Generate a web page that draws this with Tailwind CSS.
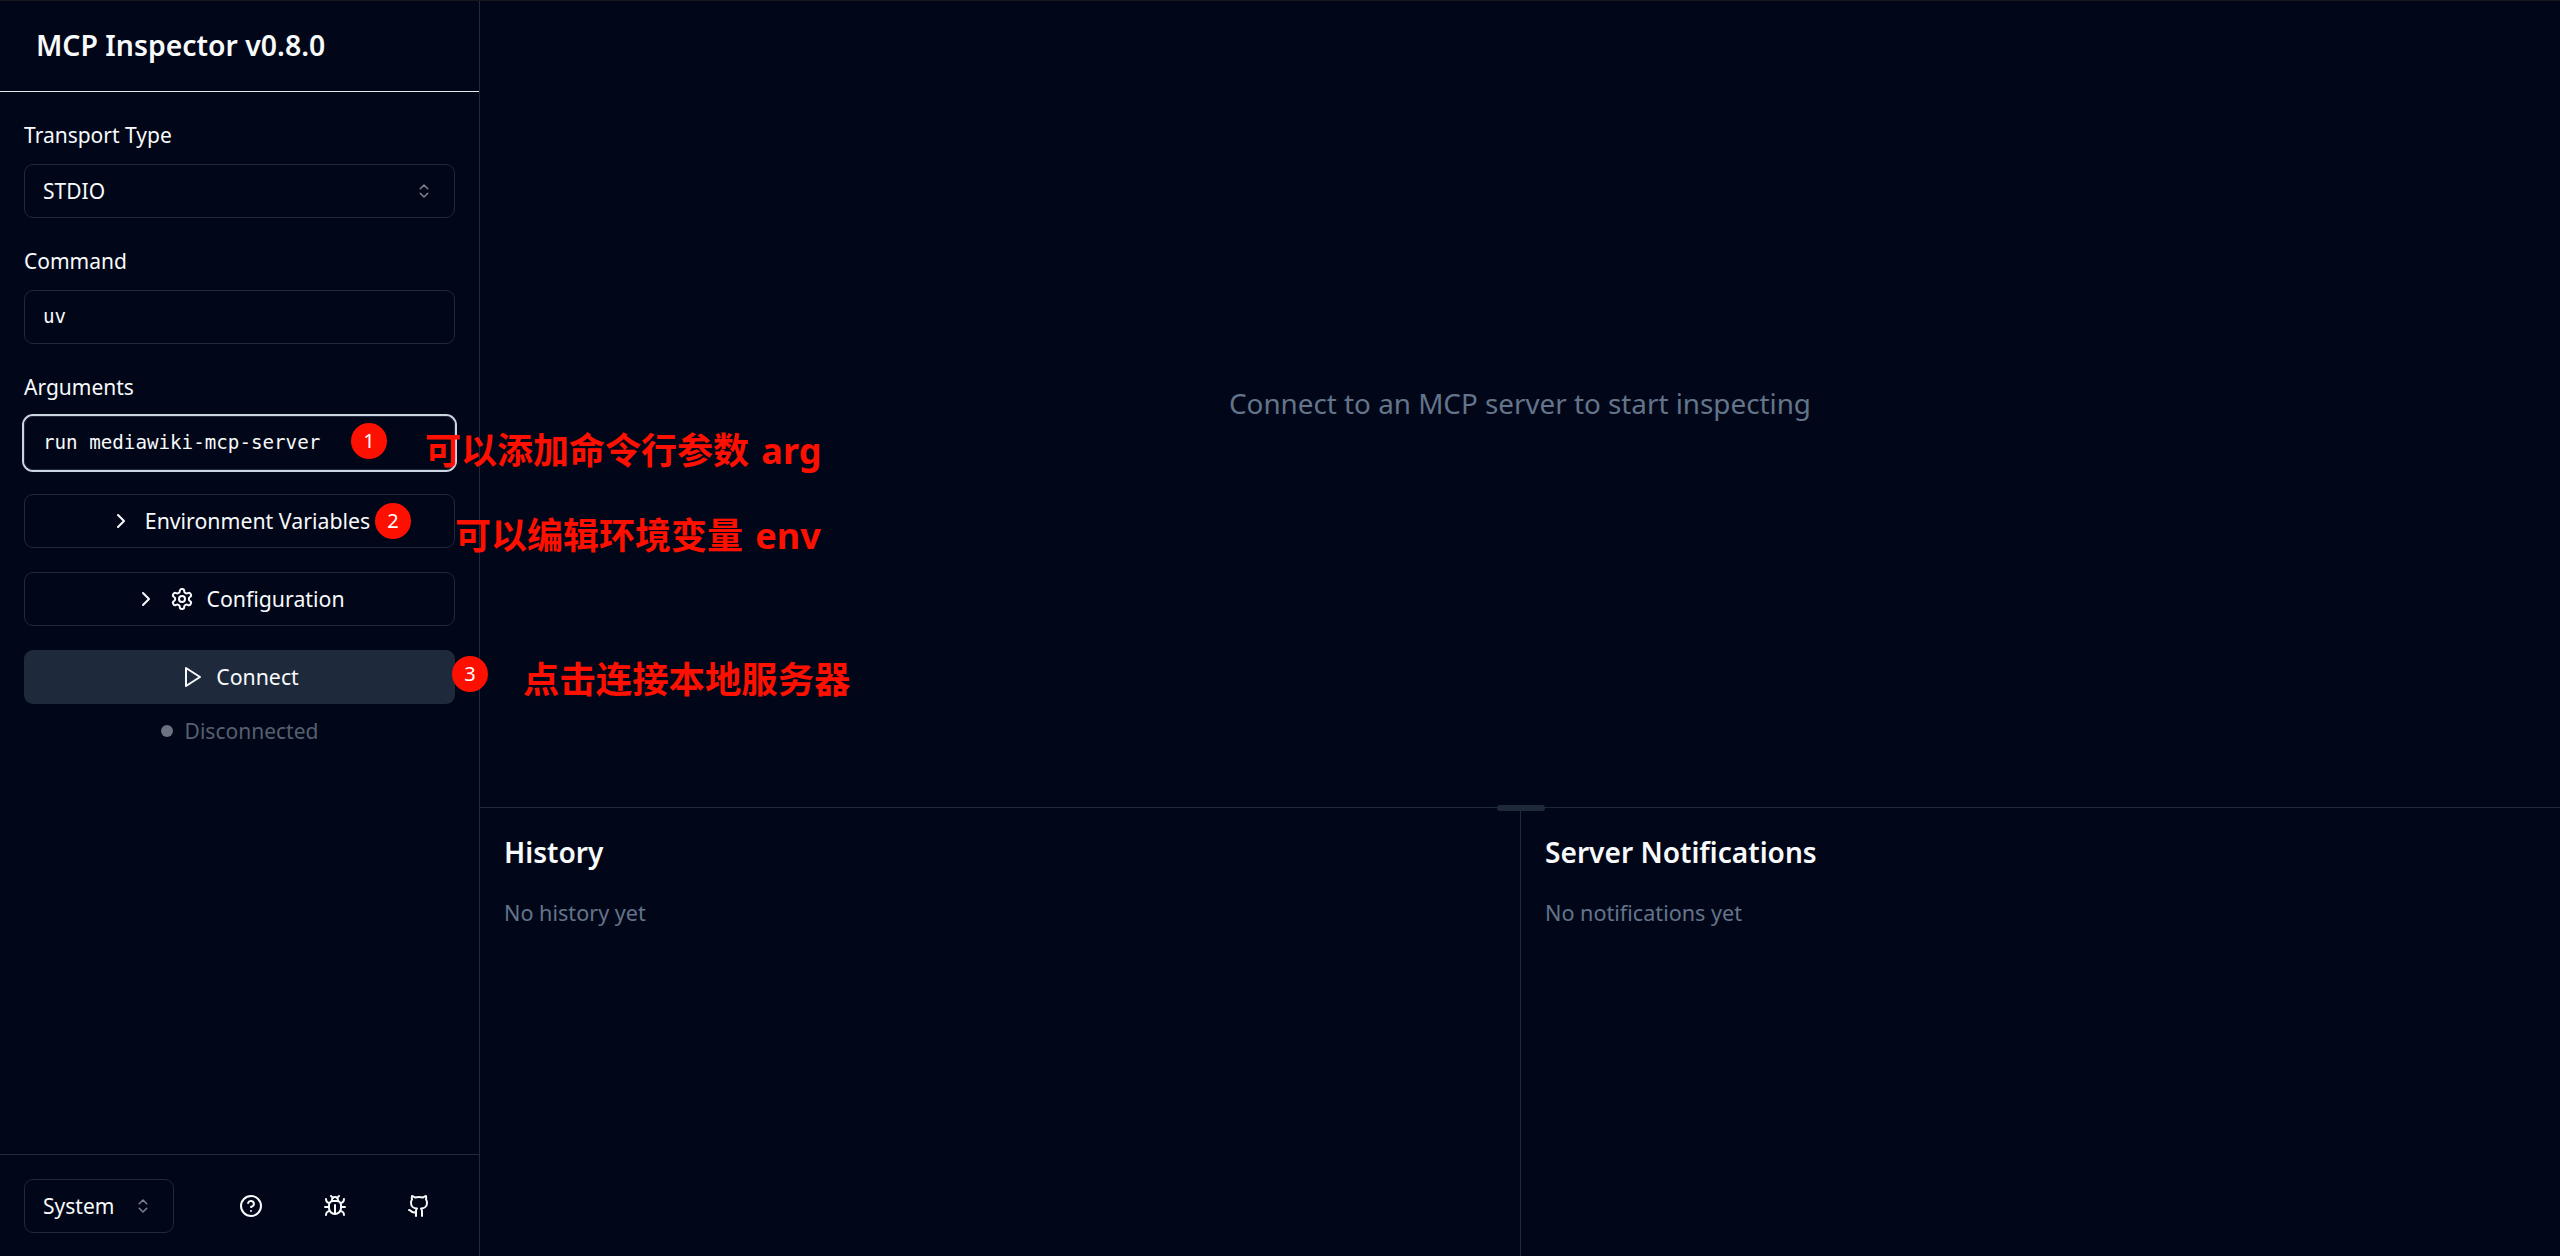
<!DOCTYPE html>
<html lang="en" class="text-[24px]">
<head>
<meta charset="utf-8">
<title>MCP Inspector</title>
<script src="https://cdn.jsdelivr.net/npm/@tailwindcss/browser@4"></script>
</head>
<body class="bg-[#010718] text-[#f8fafc] font-['Noto_Sans','Noto_Sans_CJK_SC',sans-serif] overflow-hidden">
<div class="relative flex h-[1256px] w-[2560px]">
  <aside class="w-80 shrink-0 flex flex-col border-r border-[#1e293b]">
    <div class="h-[92px] shrink-0 flex items-center px-[36px] border-b border-[#e2e8f0]">
      <h1 class="text-[28.4px] font-semibold leading-none">MCP Inspector v0.8.0</h1>
    </div>
    <div class="flex-1 p-4 flex flex-col gap-4">
      <div class="flex flex-col gap-2">
        <label class="text-sm h-6 leading-[38px]">Transport Type</label>
        <div class="h-9 rounded-md border border-[#1e293b] px-3 flex items-center justify-between text-sm">
          <span>STDIO</span>
          <svg class="w-3 h-3 mr-[3px] opacity-50" viewBox="0 0 24 24" fill="none" stroke="currentColor" stroke-width="2" stroke-linecap="round" stroke-linejoin="round"><path d="m7 15 5 5 5-5"/><path d="m7 9 5-5 5 5"/></svg>
        </div>
      </div>
      <div class="flex flex-col gap-2">
        <label class="text-sm h-6 leading-[38px]">Command</label>
        <div class="h-9 rounded-md border border-[#1e293b] px-3 flex items-center font-['DejaVu_Sans_Mono',monospace] text-[19.2px]">uv</div>
      </div>
      <div class="flex flex-col gap-2">
        <label class="text-sm h-6 leading-[38px]">Arguments</label>
        <div class="h-9 rounded-md border border-[#1e293b] px-3 flex items-center font-['DejaVu_Sans_Mono',monospace] text-[19.2px] ring-2 ring-[#cbd5e1]">run mediawiki-mcp-server</div>
      </div>
      <button class="h-9 rounded-md border border-[#1e293b] flex items-center justify-center text-[21.3px]">
        <svg class="w-4 h-4 mr-2" viewBox="0 0 24 24" fill="none" stroke="currentColor" stroke-width="2" stroke-linecap="round" stroke-linejoin="round"><path d="m9 18 6-6-6-6"/></svg>
        Environment Variables
      </button>
      <button class="h-9 rounded-md border border-[#1e293b] flex items-center justify-center text-[21.3px]">
        <svg class="w-4 h-4 mr-2" viewBox="0 0 24 24" fill="none" stroke="currentColor" stroke-width="2" stroke-linecap="round" stroke-linejoin="round"><path d="m9 18 6-6-6-6"/></svg>
        <svg class="w-4 h-4 mr-2" viewBox="0 0 24 24" fill="none" stroke="currentColor" stroke-width="2" stroke-linecap="round" stroke-linejoin="round"><path d="M12.22 2h-.44a2 2 0 0 0-2 2v.18a2 2 0 0 1-1 1.73l-.43.25a2 2 0 0 1-2 0l-.15-.08a2 2 0 0 0-2.73.73l-.22.38a2 2 0 0 0 .73 2.73l.15.1a2 2 0 0 1 1 1.72v.51a2 2 0 0 1-1 1.74l-.15.09a2 2 0 0 0-.73 2.73l.22.38a2 2 0 0 0 2.73.73l.15-.08a2 2 0 0 1 2 0l.43.25a2 2 0 0 1 1 1.73V20a2 2 0 0 0 2 2h.44a2 2 0 0 0 2-2v-.18a2 2 0 0 1 1-1.73l.43-.25a2 2 0 0 1 2 0l.15.08a2 2 0 0 0 2.73-.73l.22-.39a2 2 0 0 0-.73-2.73l-.15-.08a2 2 0 0 1-1-1.74v-.5a2 2 0 0 1 1-1.74l.15-.09a2 2 0 0 0 .73-2.73l-.22-.38a2 2 0 0 0-2.73-.73l-.15.08a2 2 0 0 1-2 0l-.43-.25a2 2 0 0 1-1-1.73V4a2 2 0 0 0-2-2z"/><circle cx="12" cy="12" r="3"/></svg>
        Configuration
      </button>
      <div class="flex flex-col gap-2">
        <button class="h-9 rounded-md bg-[#1e293b] flex items-center justify-center text-[21.3px]">
          <svg class="w-4 h-4 mr-2" viewBox="0 0 24 24" fill="none" stroke="currentColor" stroke-width="2" stroke-linecap="round" stroke-linejoin="round"><polygon points="6 3 20 12 6 21 6 3"/></svg>
          Connect
        </button>
        <div class="flex items-center justify-center gap-2 text-sm text-[#56606f]">
          <span class="w-2 h-2 rounded-full bg-[#6b7280]"></span>
          <span>Disconnected</span>
        </div>
      </div>
    </div>
    <div class="h-[102px] shrink-0 border-t border-[#1e293b] px-4 flex items-center justify-between">
      <div class="h-9 w-[150px] rounded-md border border-[#1e293b] px-3 flex items-center justify-between text-sm">
        <span>System</span>
        <svg class="w-3 h-3 mr-[3px] opacity-50" viewBox="0 0 24 24" fill="none" stroke="currentColor" stroke-width="2" stroke-linecap="round" stroke-linejoin="round"><path d="m7 15 5 5 5-5"/><path d="m7 9 5-5 5 5"/></svg>
      </div>
      <div class="flex gap-4 pr-[6px]">
        <button class="w-10 h-10 flex items-center justify-center">
          <svg class="w-4 h-4" viewBox="0 0 24 24" fill="none" stroke="currentColor" stroke-width="2" stroke-linecap="round" stroke-linejoin="round"><circle cx="12" cy="12" r="10"/><path d="M9.09 9a3 3 0 0 1 5.83 1c0 2-3 3-3 3"/><path d="M12 17h.01"/></svg>
        </button>
        <button class="w-10 h-10 flex items-center justify-center">
          <svg class="w-4 h-4" viewBox="0 0 24 24" fill="none" stroke="currentColor" stroke-width="2" stroke-linecap="round" stroke-linejoin="round"><path d="m8 2 1.88 1.88"/><path d="M14.12 3.88 16 2"/><path d="M9 7.13v-1a3.003 3.003 0 1 1 6 0v1"/><path d="M12 20c-3.3 0-6-2.7-6-6v-3a4 4 0 0 1 4-4h4a4 4 0 0 1 4 4v3c0 3.3-2.7 6-6 6"/><path d="M12 20v-9"/><path d="M6.53 9C4.6 8.8 3 7.1 3 5"/><path d="M6 13H2"/><path d="M3 21c0-2.1 1.7-3.9 3.8-4"/><path d="M20.97 5c0 2.1-1.6 3.8-3.5 4"/><path d="M22 13h-4"/><path d="M17.2 17c2.1.1 3.8 1.9 3.8 4"/></svg>
        </button>
        <button class="w-10 h-10 flex items-center justify-center">
          <svg class="w-4 h-4" viewBox="0 0 24 24" fill="none" stroke="currentColor" stroke-width="2" stroke-linecap="round" stroke-linejoin="round"><path d="M15 22v-4a4.8 4.8 0 0 0-1-3.5c3 0 6-2 6-5.5.08-1.25-.27-2.48-1-3.5.28-1.15.28-2.35 0-3.5 0 0-1 0-3 1.5-2.64-.5-5.36-.5-8 0C6 2 5 2 5 2c-.3 1.15-.3 2.35 0 3.5A5.403 5.403 0 0 0 4 9c0 3.5 3 5.5 6 5.5-.39.49-.68 1.05-.85 1.65-.17.6-.22 1.23-.15 1.85v4"/><path d="M9 18c-4.51 2-5-2-7-2"/></svg>
        </button>
      </div>
    </div>
  </aside>
  <main class="relative flex-1 flex flex-col min-w-0">
    <div class="flex-1 flex items-center justify-center text-[27.8px] text-[#64748b]">Connect to an MCP server to start inspecting</div>
    <div class="relative h-[449px] shrink-0 border-t border-[#1e293b] grid grid-cols-2">
      <div class="absolute left-[1017px] top-[-3px] w-8 h-1 rounded-full bg-[#1e293b]"></div>
      <section class="p-4">
        <h2 class="text-[28.1px] font-semibold leading-[40px] mb-[25px]">History</h2>
        <p class="text-[21.6px] text-[#64748b]">No history yet</p>
      </section>
      <section class="border-l border-[#1e293b] p-4">
        <h2 class="text-[28.1px] font-semibold leading-[40px] mb-[25px]">Server Notifications</h2>
        <p class="text-[21.6px] text-[#64748b]">No notifications yet</p>
      </section>
    </div>
  </main>

  <span class="absolute left-[351px] top-[423px] w-6 h-6 rounded-full bg-[#fe1000] text-white text-[20px] flex items-center justify-center">1</span>
  <span class="absolute left-[375px] top-[503px] w-6 h-6 rounded-full bg-[#fe1000] text-white text-[20px] flex items-center justify-center">2</span>
  <span class="absolute left-[452px] top-[656px] w-6 h-6 rounded-full bg-[#fe1000] text-white text-[20px] flex items-center justify-center">3</span>
  <span class="absolute left-[425px] top-[424px] text-[36px] leading-[54px] font-bold text-[#fe1000] [word-spacing:3px] whitespace-nowrap">可以添加命令行参数 arg</span>
  <span class="absolute left-[455px] top-[509px] text-[36px] leading-[54px] font-bold text-[#fe1000] [word-spacing:3px] whitespace-nowrap">可以编辑环境变量 env</span>
  <span class="absolute left-[523px] top-[652px] text-[36.4px] leading-[54px] font-bold text-[#fe1000] whitespace-nowrap">点击连接本地服务器</span>
  <div class="absolute inset-x-0 top-0 h-px bg-[#17171a]"></div>
</div>
</body>
</html>
